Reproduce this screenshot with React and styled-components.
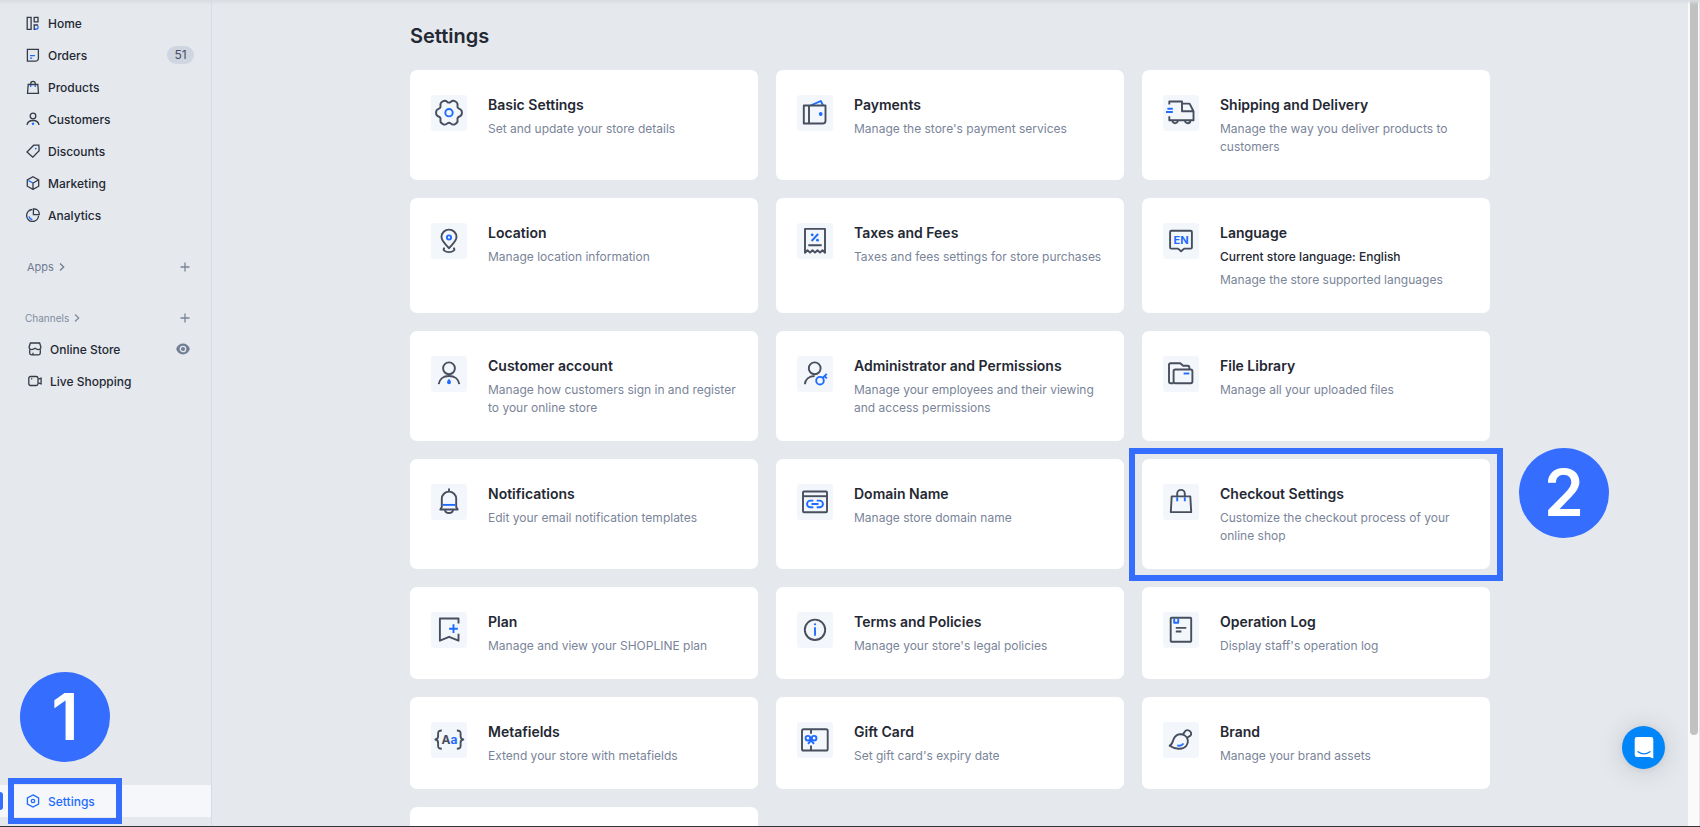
import React from "react";
import styled, { createGlobalStyle, css } from "styled-components";

const ink = "#242833";
const line = "#474f5e";
const muted = "#7a8499";
const accent = "#356dff";
const iconBlue = "#1f6bff";

const GlobalStyle = createGlobalStyle`
  *, *::before, *::after { box-sizing: border-box; }
  body {
    margin: 0;
    background: #e5e9ee;
    color: ${ink};
    font-family: Inter, "Liberation Sans", sans-serif;
    font-size: 12px;
  }
  a { color: inherit; text-decoration: none; }
  button { font: inherit; border: 0; padding: 0; background: none; cursor: pointer; }
`;

const Page = styled.div`
  position: relative;
  display: flex;
  height: 100vh;
  overflow: hidden;
  border-bottom: 1px solid #33363c;
`;

const TopShade = styled.div`
  position: absolute;
  inset: 0 0 auto 0;
  height: 5px;
  background: linear-gradient(#d8dce1, rgba(229, 233, 238, 0));
`;

const Sidebar = styled.aside`
  display: flex;
  flex-direction: column;
  flex: none;
  width: 212px;
  padding: 7px 0 9px;
  border-right: 1px solid #d5dbe7;
`;

const NavList = styled.ul`
  margin: 0;
  padding: 0;
  list-style: none;
`;

const NavRow = styled.li`
  display: flex;
  align-items: center;
  justify-content: space-between;
  height: 32px;
  padding: ${(p) => (p.$channel ? "0 21px 0 28px" : "0 17px 0 26px")};
`;

const NavLink = styled.a`
  display: flex;
  align-items: center;
  gap: 8px;
  font-weight: 500;
`;

const Count = styled.span`
  min-width: 27px;
  padding: 0 6px;
  border-radius: 9px;
  background: #cfd6e2;
  color: #474f5e;
  font-size: 12px;
  line-height: 18px;
  text-align: center;
`;

const GroupHead = styled.div`
  display: flex;
  align-items: center;
  justify-content: space-between;
  height: 30px;
  margin-top: 21px;
  padding: 0 21px 0 ${(p) => (p.$tight ? 25 : 27)}px;
  color: ${muted};
`;

const GroupToggle = styled.button`
  display: flex;
  align-items: center;
  gap: 5px;
  color: ${(p) => (p.$tight ? "#818b9e" : "#717b91")};
  font-size: ${(p) => (p.$tight ? 10 : 11)}px;
`;

const IconButton = styled.button`
  display: flex;
  color: ${muted};
`;

const SettingsRow = styled.div`
  position: relative;
  display: flex;
  align-items: center;
  height: 32px;
  margin-top: auto;
  padding-left: 26px;
  background: #f5f7fb;
  color: ${iconBlue};

  &::before {
    content: "";
    position: absolute;
    left: 0;
    top: 7px;
    width: 3px;
    height: 18px;
    border-radius: 0 3px 3px 0;
    background: ${accent};
  }
`;

const frame = css`
  position: absolute;
  border: 6px solid ${accent};
  pointer-events: none;
`;

const SettingsFrame = styled.span`
  ${frame}
  inset: -7px 89px -7px 8px;
`;

const CardFrame = styled.span`
  ${frame}
  inset: -11px -13px -12px;
`;

const Step = styled.span`
  position: absolute;
  display: flex;
  align-items: center;
  justify-content: center;
  width: 90px;
  height: 90px;
  border-radius: 50%;
  background: ${accent};
  color: #fff;
  font-size: 64px;
  font-weight: 600;
  line-height: 90px;
`;

const StepOne = styled(Step)`
  left: 20px;
  bottom: 55px;
`;

const StepTwo = styled(Step)`
  top: -11px;
  right: -119px;
`;

const Main = styled.main`
  flex: 1;
  min-width: 0;
  overflow: hidden;
  padding: 24px 24px 0;
`;

const Content = styled.div`
  max-width: 1080px;
  margin: 0 auto;
`;

const PageTitle = styled.h1`
  margin: 0 0 22px;
  font-size: 20px;
  font-weight: 600;
  line-height: 24px;
`;

const Grid = styled.div`
  display: grid;
  grid-template-columns: repeat(3, 1fr);
  gap: 18px;
`;

const Card = styled.a`
  position: relative;
  display: flex;
  align-items: flex-start;
  gap: 21px;
  min-height: 92px;
  padding: 25px 16px 24px 21px;
  border-radius: 7px;
  background: #fff;
`;

const IconTile = styled.span`
  flex: none;
  width: 36px;
  height: 36px;
  border-radius: 3px;
  background: #f3f7fc;
`;

const CardBody = styled.div`
  flex: 1;
  min-width: 0;
`;

const CardTitle = styled.h2`
  margin: 0 0 5px;
  font-size: 14px;
  font-weight: 600;
  line-height: 20px;
`;

const CardNote = styled.p`
  margin: 0 0 5px;
  font-size: 12px;
  font-weight: 500;
  line-height: 18px;
`;

const CardText = styled.p`
  margin: 0;
  color: ${muted};
  font-size: 12px;
  line-height: 18px;
`;

const ScrollTrack = styled.div`
  flex: none;
  width: 12px;
  padding: 0 2px;
  border-right: 1px solid #e4e4e4;
  background: #fafafa;
`;

const ScrollThumb = styled.div`
  width: 8px;
  height: 89%;
  border-radius: 0 0 4px 4px;
  background: #c1c1c1;
`;

const ChatButton = styled.button`
  position: absolute;
  right: 35px;
  bottom: 57px;
  display: flex;
  align-items: center;
  justify-content: center;
  width: 43px;
  height: 43px;
  border-radius: 50%;
  background: #0086f9;
  box-shadow: 0 1px 6px rgba(0, 0, 0, 0.08), 0 2px 28px rgba(0, 0, 0, 0.14);
`;

const TileSvg = styled.svg`
  display: block;
  width: 36px;
  height: 36px;
  fill: none;
  stroke: ${line};
  stroke-width: 1.9;
  stroke-linejoin: round;

  .b { stroke: ${iconBlue}; }
  .d { fill: ${iconBlue}; stroke: none; }
  text { stroke: none; font-weight: 700; }
`;

const SmallSvg = styled.svg`
  display: block;
  flex: none;
  fill: none;
  stroke: ${(p) => (p.$plain ? "currentColor" : "#353b47")};
  stroke-width: 1.3;

  .b { stroke: ${iconBlue}; }
  .d { fill: ${iconBlue}; stroke: none; }
`;

function gearPath(cx, cy) {
  const pts = [];
  for (let i = 0; i < 6; i += 1) {
    [[-13, 13.3], [13, 13.3], [30, 9.2]].forEach(([offset, r]) => {
      const a = ((i * 60 + offset) * Math.PI) / 180;
      pts.push([cx + r * Math.cos(a), cy + r * Math.sin(a)]);
    });
  }
  const mid = (p, q) => `${(p[0] + q[0]) / 2} ${(p[1] + q[1]) / 2}`;
  const start = mid(pts[pts.length - 1], pts[0]);
  return (
    `M${start}` +
    pts.map((p, i) => `Q${p[0]} ${p[1]} ${mid(p, pts[(i + 1) % pts.length])}`).join("") +
    "Z"
  );
}

const tileIcons = {
  gear: (
    <>
      <path d={gearPath(18, 17.7)} />
      <circle className="b" cx="18" cy="17.7" r="3.7" />
    </>
  ),
  wallet: (
    <>
      <path className="b" d="M14 10.3 23.8 6l2.200 4.300" />
      <path d="M6.800 10.500h21.700v15.200a2.800 2.800 0 0 1-2.800 2.800H6.800zM12 10.500v18" />
      <circle className="d" cx="23.700" cy="19" r="1.900" />
    </>
  ),
  truck: (
    <>
      <path d="M6.300 9.500v-3H19v9.800h11.500v8.900H6.300v-4M19 8.600h6.800c.6 0 1 .3 1.200.8l3.500 6.900" />
      <path d="M9.400 25.500a2.700 2.700 0 1 0 5.400 0M22 25.500a2.700 2.700 0 1 0 5.400 0" />
      <path className="b" d="M4.400 13.700h5.400M3 17h6.800" />
    </>
  ),
  pin: (
    <>
      <path d="M18 25.300c-2-3-7.500-6.700-7.500-11.200a7.500 7.500 0 0 1 15 0c0 4.500-5.500 8.200-7.500 11.200z" />
      <path d="M13.600 24.700c-2.600 2 .4 4.400 4.400 4.400s7-2.400 4.400-4.400" />
      <circle className="b" cx="18" cy="14.500" r="2.100" />
    </>
  ),
  receipt: (
    <>
      <path d="M8 29.800V5.900h20v23.900l-2.500-2.600-2.500 2.400-2.500-2.400-2.500 2.400-2.500-2.400-2.500 2.400-2.500-2.400zM11.300 22.300h13.400" />
      <path className="b" d="m14.600 18 6.500-7" />
      <circle className="d" cx="15.200" cy="11.800" r="1.400" />
      <circle className="d" cx="20.500" cy="17.200" r="1.400" />
    </>
  ),
  language: (
    <>
      <path d="M8.300 7.700h19.400c.7 0 1.200.5 1.200 1.200v15.500c0 .7-.5 1.200-1.200 1.200h-6.500L18.100 28.300l-3.100-2.700H8.300c-.7 0-1.200-.5-1.200-1.200V8.900c0-.7.5-1.200 1.200-1.200z" />
      <text x="18" y="20.500" textAnchor="middle" fontSize="11" fill={iconBlue}>EN</text>
    </>
  ),
  customer: (
    <>
      <circle cx="18" cy="12.300" r="5.900" />
      <path d="M7.700 28.200c.6-5 4.700-8.200 10.300-8.200s9.700 3.200 10.300 8.200" />
      <path className="d" d="M18 22.500c.9 1.700 2 2.600 2 3.800a2 2 0 0 1-4 0c0-1.200 1.100-2.100 2-3.800z" />
    </>
  ),
  admin: (
    <>
      <circle cx="17.700" cy="12.300" r="5.900" />
      <path d="M7.900 28.200c.3-4.800 4-8 9.700-8.200" />
      <circle className="b" cx="23" cy="24.700" r="3.800" />
      <path className="b" d="m25.600 21.900 4.200-4M27.500 20.100l2.300 2.300" />
    </>
  ),
  folder: (
    <>
      <path d="M10.500 27.200H7.700a1.700 1.700 0 0 1-1.700-1.700V9c0-1 .7-1.700 1.700-1.700h9.500l3 2.500h4.500c1 0 1.600.6 1.600 1.600v2" />
      <rect x="10.600" y="13.500" width="18.800" height="13.800" rx="1.700" />
      <path className="b" d="M20.600 17.500h5.700" />
    </>
  ),
  bell: (
    <>
      <path d="M18 4.500v3M10.800 23v-8.200a7.200 7.200 0 0 1 14.400 0V23l1.500 2.500H9.300z" />
      <path d="M14 25.800c.4 4.200 7.600 4.200 8 0" />
      <path className="b" d="M11.600 20.900h12.800" />
    </>
  ),
  domain: (
    <>
      <rect x="6" y="7.500" width="24" height="20.700" rx="1" />
      <path d="M6 12.200h24" />
      <path className="b" d="M16.300 16.600h-2.900a3.300 3.300 0 0 0 0 6.700h2.900M19.700 16.600h2.900a3.300 3.300 0 0 1 0 6.700h-2.900M14.500 20h7" />
    </>
  ),
  bag: (
    <>
      <path d="M8.700 12.400h18.600l.9 15.700H7.800z" />
      <path d="M14.200 12.400V9.700a3.800 3.800 0 0 1 7.600 0v2.700" />
      <path className="b" d="M14.200 13.200v4M21.800 13.200v4" />
    </>
  ),
  plan: (
    <>
      <path d="M27.500 11.500v-5H8.900v22.200l9.200-3.900 9.400 3.900v-7" />
      <path className="b" d="M22.500 12.300V21M18.100 16.700h8.700" />
    </>
  ),
  info: (
    <>
      <circle cx="18" cy="17.800" r="10.200" />
      <path className="b" d="M18 15.300v8.400" />
      <circle className="d" cx="18" cy="12.300" r="1.100" />
    </>
  ),
  log: (
    <>
      <rect x="7.700" y="5.700" width="20.500" height="24" rx=".8" />
      <path className="b" d="M11.200 6.500v4.300h4V6.500" />
      <path d="M12.800 15.900h10.500M12.800 19.500h5.600" />
    </>
  ),
  meta: (
    <>
      <path d="M10.800 8.500c-3.200 0-3.700.8-3.700 3v2.800c0 2-.6 2.900-2.700 3.200 2.100.3 2.700 1.200 2.700 3.200v3c0 2.200.5 3 3.700 3M25.900 8.500c3.200 0 3.700.8 3.700 3v2.800c0 2 .6 2.900 2.700 3.200-2.100.3-2.700 1.200-2.700 3.200v3c0 2.200-.5 3-3.700 3" />
      <text x="18.400" y="22" textAnchor="middle" fontSize="12" fill={line}>
        A<tspan fill={iconBlue}>a</tspan>
      </text>
    </>
  ),
  gift: (
    <>
      <rect x="5" y="7.200" width="25.700" height="21.300" rx="1.600" />
      <path d="M14 7.200v4.500M14 23.500v5" />
      <g className="b">
        <circle cx="10.900" cy="16.200" r="2.300" />
        <circle cx="17.100" cy="16.200" r="2.300" />
        <path d="m13 17.300 4 4.500M15 17.300l-4 4.500" />
      </g>
    </>
  ),
  brand: (
    <>
      <path d="M6.600 23.700c3.600-1.200 2.500-5.300 5.300-8.800 2.300-2.900 6.400-3.500 9.600-1.600 3.800 2.300 4.500 7.200 1.700 10.700-3.600 4.400-11.500 3-16.600-.3z" />
      <path d="M19.700 12.300c1.900-1 1.700-3.900 4.200-4.200 2.500-.2 4.900 2.200 4.200 4.500-.5 2-3.400 1.900-4.100 3.500" />
      <path className="b" d="M14.200 23.400c2.400.7 4.800 0 6.300-1.900" />
    </>
  ),
};

function TileIcon({ name }) {
  return (
    <IconTile>
      <TileSvg viewBox="0 0 36 36" aria-hidden="true">{tileIcons[name]}</TileSvg>
    </IconTile>
  );
}

const navIcons = {
  home: (
    <>
      <path d="M1.200 1.400h3.900v12H1.200zM8.200 1.400H12v4.400H8.200z" />
      <path d="M12 9H8.200v4.400h1.600" />
      <path className="b" d="M12 9.500v1.700a2 2 0 0 1-2 2H9" />
    </>
  ),
  orders: (
    <>
      <path d="M1.400 1.400h11v9a2.800 2.800 0 0 1-2.800 2.800H1.400z" />
      <path className="b" d="M4 7.700h5M4 10.200h2.200" />
    </>
  ),
  products: (
    <>
      <path d="M2.200 4.500h9.600l.7 9H1.500z" />
      <path d="M4.700 4.500V3.700a2.300 2.300 0 0 1 4.600 0v.8" />
      <path className="b" d="M4.700 5v2M9.300 5v2" />
    </>
  ),
  customers: (
    <>
      <circle cx="7" cy="4" r="2.800" />
      <path d="M1 13c.5-3 2.800-4.500 6-4.500s5.500 1.500 6 4.500" />
      <circle className="d" cx="7" cy="11.700" r="1.200" />
    </>
  ),
  discounts: (
    <>
      <path d="M7.700 1.200h5.200l.2 5.600-6.300 6.400L1 8z" />
      <circle className="d" cx="9.700" cy="4.600" r=".9" />
    </>
  ),
  marketing: (
    <>
      <path d="m7 .8 5.700 3.100v6.300L7 13.400l-5.700-3.200V3.900zM7 7v6.400" />
      <path d="M7 7l5.500-3" />
      <path className="b" d="M2.500 4.600 7 7" />
    </>
  ),
  analytics: (
    <>
      <path d="M6.300 1.500a6 6 0 1 0 6.300 6.300" />
      <path d="M7.400 1h1.200a4.600 4.600 0 0 1 4.600 4.600v1H7.400z" />
      <path className="b" d="M3 8.400a4.200 4.200 0 0 0 3.400 3.200" />
    </>
  ),
  store: (
    <>
      <path d="M2.400 1h9.200l1.200 3.700v1.400c-1.300 1.700-3.800 1.700-5.800.2-2 1.500-4.500 1.500-5.800-.2V4.700z" />
      <path d="M1.700 7.200v3.900c0 1.100.6 1.800 1.700 1.800h7.200c1.100 0 1.700-.7 1.700-1.800V7.200M5 12.700v-2" />
    </>
  ),
  live: (
    <>
      <rect x=".8" y="2.500" width="9.200" height="9" rx="1.800" />
      <path d="m10.200 5.200 2.900-1v5.600l-2.900-1" />
      <path d="M3 4.900h1.300" />
    </>
  ),
  settings: (
    <>
      <path d="m7 .9 5.600 3.100v6L7 13.100 1.400 10V4z" />
      <circle cx="7" cy="7" r="1.700" />
    </>
  ),
};

function NavIcon({ name, plain }) {
  return (
    <SmallSvg $plain={plain} width="14" height="14" viewBox="0 0 14 14" aria-hidden="true">
      {navIcons[name]}
    </SmallSvg>
  );
}

function Chevron() {
  return (
    <SmallSvg $plain width="6" height="8" viewBox="0 0 6 8" aria-hidden="true">
      <path d="M1 .5 4.700 4 1 7.500" />
    </SmallSvg>
  );
}

function Plus() {
  return (
    <SmallSvg $plain width="10" height="10" viewBox="0 0 10 10" aria-hidden="true">
      <path d="M5 .5v9M.5 5h9" />
    </SmallSvg>
  );
}

function Eye() {
  return (
    <svg width="14" height="12" viewBox="0 0 14 12" aria-hidden="true">
      <path d="M7 .6c3.200 0 5.600 2 6.900 5.400C12.600 9.400 10.200 11.400 7 11.400S1.400 9.400.1 6C1.400 2.600 3.800.6 7 .6z" fill="#717e96" />
      <circle cx="7" cy="6" r="2.700" fill="none" stroke="#e5e9ee" strokeWidth="1.300" />
    </svg>
  );
}

const nav = [
  { icon: "home", label: "Home" },
  { icon: "orders", label: "Orders", count: 51 },
  { icon: "products", label: "Products" },
  { icon: "customers", label: "Customers" },
  { icon: "discounts", label: "Discounts" },
  { icon: "marketing", label: "Marketing" },
  { icon: "analytics", label: "Analytics" },
];

const cards = [
  { icon: "gear", title: "Basic Settings", text: "Set and update your store details" },
  { icon: "wallet", title: "Payments", text: "Manage the store's payment services" },
  { icon: "truck", title: "Shipping and Delivery", text: "Manage the way you deliver products to customers" },
  { icon: "pin", title: "Location", text: "Manage location information" },
  { icon: "receipt", title: "Taxes and Fees", text: "Taxes and fees settings for store purchases" },
  { icon: "language", title: "Language", note: "Current store language: English", text: "Manage the store supported languages" },
  { icon: "customer", title: "Customer account", text: "Manage how customers sign in and register to your online store" },
  { icon: "admin", title: "Administrator and Permissions", text: "Manage your employees and their viewing and access permissions" },
  { icon: "folder", title: "File Library", text: "Manage all your uploaded files" },
  { icon: "bell", title: "Notifications", text: "Edit your email notification templates" },
  { icon: "domain", title: "Domain Name", text: "Manage store domain name" },
  { icon: "bag", title: "Checkout Settings", text: "Customize the checkout process of your online shop", step: 2 },
  { icon: "plan", title: "Plan", text: "Manage and view your SHOPLINE plan" },
  { icon: "info", title: "Terms and Policies", text: "Manage your store's legal policies" },
  { icon: "log", title: "Operation Log", text: "Display staff's operation log" },
  { icon: "meta", title: "Metafields", text: "Extend your store with metafields" },
  { icon: "gift", title: "Gift Card", text: "Set gift card's expiry date" },
  { icon: "brand", title: "Brand", text: "Manage your brand assets" },
];

function SettingsCard({ icon, title, note, text, step }) {
  return (
    <Card href="#">
      <TileIcon name={icon} />
      <CardBody>
        <CardTitle>{title}</CardTitle>
        {note && <CardNote>{note}</CardNote>}
        <CardText>{text}</CardText>
      </CardBody>
      {step && (
        <>
          <CardFrame />
          <StepTwo>{step}</StepTwo>
        </>
      )}
    </Card>
  );
}

export default function App() {
  return (
    <Page>
      <GlobalStyle />
      <Sidebar>
        <nav>
          <NavList>
            {nav.map((item) => (
              <NavRow key={item.label}>
                <NavLink href="#">
                  <NavIcon name={item.icon} />
                  {item.label}
                </NavLink>
                {item.count && <Count>{item.count}</Count>}
              </NavRow>
            ))}
          </NavList>
          <GroupHead>
            <GroupToggle>Apps <Chevron /></GroupToggle>
            <IconButton aria-label="Add app"><Plus /></IconButton>
          </GroupHead>
          <GroupHead $tight>
            <GroupToggle $tight>Channels <Chevron /></GroupToggle>
            <IconButton aria-label="Add channel"><Plus /></IconButton>
          </GroupHead>
          <NavList>
            <NavRow $channel>
              <NavLink href="#"><NavIcon name="store" />Online Store</NavLink>
              <IconButton aria-label="View online store"><Eye /></IconButton>
            </NavRow>
            <NavRow $channel>
              <NavLink href="#"><NavIcon name="live" />Live Shopping</NavLink>
            </NavRow>
          </NavList>
        </nav>
        <SettingsRow>
          <NavLink href="#" aria-current="page">
            <NavIcon name="settings" plain />
            Settings
          </NavLink>
          <StepOne>1</StepOne>
          <SettingsFrame />
        </SettingsRow>
      </Sidebar>
      <Main>
        <Content>
          <PageTitle>Settings</PageTitle>
          <Grid>
            {cards.map((card) => (
              <SettingsCard key={card.title} {...card} />
            ))}
            <Card as="div" />
          </Grid>
        </Content>
      </Main>
      <ScrollTrack aria-hidden="true">
        <ScrollThumb />
      </ScrollTrack>
      <TopShade />
      <ChatButton aria-label="Open chat">
        <svg width="20" height="24" viewBox="0 0 20 24" aria-hidden="true">
          <path d="M3 1h14a2.300 2.300 0 0 1 2.300 2.300v19.200L15.500 21H3a2.300 2.300 0 0 1-2.300-2.300V3.300A2.300 2.300 0 0 1 3 1z" fill="#fff" />
          <path d="M4 15.700c3.600 2.700 8.400 2.700 12 0" fill="none" stroke="#0086f9" strokeWidth="1.300" strokeLinecap="round" />
        </svg>
      </ChatButton>
    </Page>
  );
}
